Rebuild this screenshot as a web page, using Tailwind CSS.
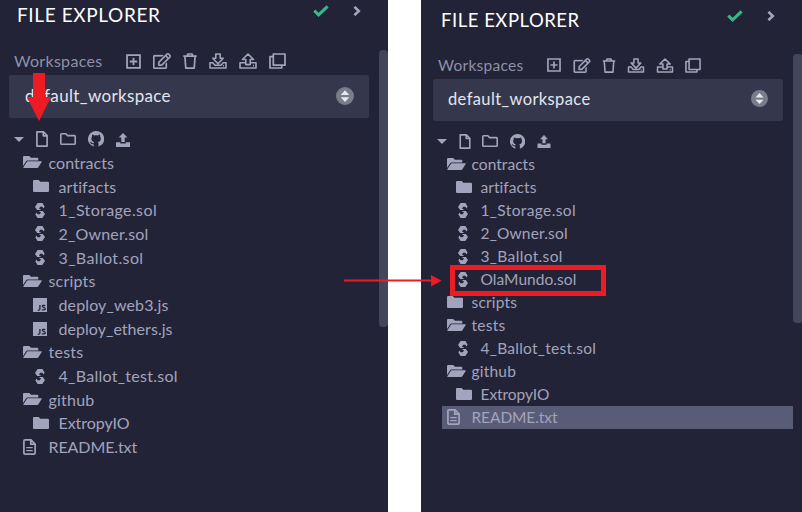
<!DOCTYPE html>
<html lang="en">
<head>
<meta charset="utf-8">
<title>File Explorer</title>
<script src="https://cdn.jsdelivr.net/npm/@tailwindcss/browser@4"></script>
</head>
<body class="bg-white overflow-hidden font-['Lato','Noto_Sans',sans-serif]">
<svg class="hidden">
  <symbol id="check" viewBox="0 0 16 12"><path d="M1.3 5.6 5.6 9.8 14.6 1.3" fill="none" stroke="#32ba89" stroke-width="3"/></symbol>
  <symbol id="chev" viewBox="0 0 8 10"><path d="M1.4 .8 5.8 5 1.4 9.200" fill="none" stroke="currentColor" stroke-width="2.600"/></symbol>
  <symbol id="plus" viewBox="0 0 16 16"><path d="M1.1 1.1h13.800v13.800H1.100zM8 4v8M4 8h8" fill="none" stroke="currentColor" stroke-width="1.900"/></symbol>
  <symbol id="edit" viewBox="0 0 576 512"><path fill="currentColor" stroke="currentColor" stroke-width="8" d="M402.300 344.900l32-32c5-5 13.700-1.500 13.700 5.700V464c0 26.500-21.500 48-48 48H48c-26.500 0-48-21.500-48-48V112c0-26.500 21.500-48 48-48h273.500c7.100 0 10.700 8.600 5.700 13.700l-32 32c-1.500 1.500-3.500 2.300-5.700 2.300H48v352h352V350.500c0-2.100.8-4.100 2.300-5.600zm156.600-201.800L296.300 405.700l-90.400 10c-26.200 2.900-48.500-19.200-45.600-45.600l10-90.400L432.900 17.100c22.900-22.900 59.900-22.900 82.700 0l43.200 43.200c22.900 22.900 22.900 60 .1 82.800zM460.100 174L402 115.900 216.200 301.800l-7.300 65.300 65.300-7.300L460.100 174zm64.800-79.700l-43.200-43.200c-4.100-4.100-10.800-4.100-14.800 0L436 82l58.100 58.100 30.900-30.900c4-4.200 4-10.800-.1-14.900z"/></symbol>
  <symbol id="trash" viewBox="0 0 14 16"><path d="M.3 3.200h13.400M4 2.800l1-1.800h4l1 1.800M1.900 3.500l.9 11.600h8.400l.9-11.600" fill="none" stroke="currentColor" stroke-width="1.700" stroke-linejoin="round"/></symbol>
  <symbol id="down" viewBox="0 0 18 16"><path d="M4.200 9.700H1v5.300h16V9.700h-3.200M6.800 1h4.400v4.200h3L9 10.800 3.800 5.200h3zM3.800 9.700 6 12.200h6l2.200-2.500M14 12.700h1" fill="none" stroke="currentColor" stroke-width="1.600" stroke-linejoin="round"/></symbol>
  <symbol id="up" viewBox="0 0 18 16"><path d="M6.800 9.700H1v5.300h16V9.700h-5.800M6.800 11.600V6.500H3.400L9 1l5.600 5.500h-3.400v5.100zM6.800 11.600h4.400M14 12.600h1" fill="none" stroke="currentColor" stroke-width="1.600" stroke-linejoin="round"/></symbol>
  <symbol id="copy" viewBox="0 0 17 16"><path d="M4.300 1h11.700v11.200H4.300zM3.800 3.700H1V15h11.700v-2.500" fill="none" stroke="currentColor" stroke-width="1.700" stroke-linejoin="round"/></symbol>
  <symbol id="sort" viewBox="0 0 18 18"><circle cx="9" cy="9" r="9" fill="#797c8a"/><path d="M4.700 8 9 3.200 13.300 8zM4.700 10.200h8.600L9 14.900z" fill="#e6e8ee"/></symbol>
  <symbol id="caret" viewBox="0 0 10 5"><path d="M0 0h10L5 5z" fill="currentColor"/></symbol>
  <symbol id="file" viewBox="0 0 12 16"><path d="M.9.9h6.600L11.100 4.500v10.600H.9zM7.300 1v3.800H11" fill="none" stroke="currentColor" stroke-width="1.700" stroke-linejoin="round"/></symbol>
  <symbol id="folderO" viewBox="0 0 16 12"><path d="M.8 1.500q0-.7.700-.7h4.300L7.600 2.600h6.900q.7 0 .7.700v7.200q0 .7-.7.700h-13q-.7 0-.7-.7z" fill="none" stroke="currentColor" stroke-width="1.600"/></symbol>
  <symbol id="github" viewBox="0 0 16 16"><path fill="currentColor" fill-rule="evenodd" d="M8 .1A7.900 7.900 0 0 0 5.700 15.600V13.200c-2 .4-2.900-.5-3.300-1.500-.2-.4-.5-.8-.9-1 .9-.2 1.500.3 2 .9.600.8 1.400.9 2.200.5.1-.5.300-.9.600-1.200-1.900-.3-2.900-1.300-2.900-3.500 0-.8.300-1.500.7-2-.1-.5-.1-1.100.2-1.800.8 0 1.400.4 2 .8a7 7 0 0 1 3.600 0c.6-.4 1.200-.8 2-.8.3.7.300 1.300.2 1.800.4.500.7 1.200.7 2 0 2.200-1 3.200-2.900 3.500.4.400.6.900.6 1.700v3A7.900 7.900 0 0 0 8 .1z"/></symbol>
  <symbol id="publish" viewBox="0 0 14 14"><path fill="currentColor" d="M7 0l4.400 4.600H8.700V9H5.300V4.600H2.600zM0 9.200h4.300v1.300h5.400V9.200H14V14H0z"/></symbol>
  <symbol id="open" viewBox="0 0 19 12"><path fill="currentColor" d="M0 1Q0 0 1 0h5.200l1.800 1.700h6.300q1 0 1 1v1.900H4.600q-1 0-1.600.8L0 10zM5 5.200h13.400q.6.200.3.800l-3.300 5.200q-.4.800-1.100.8H.7Q0 11.800.4 11.200L3.800 5.900q.4-.7 1.200-.7z"/></symbol>
  <symbol id="folder" viewBox="0 0 16 12"><path fill="currentColor" d="M0 1.100Q0 0 1.100 0h4.500l1.800 1.700h7.500q1.100 0 1.100 1.100v8.100q0 1.100-1.100 1.100H1.100Q0 12 0 10.900z"/></symbol>
  <symbol id="sol" viewBox="0 0 10 15"><path fill="currentColor" d="M2.600 0h4.800l2.200 3.500-1 2L7.400 3.800H5.200L4 5.600 6.300 7.100H2.200L0 4zM7.300 15H2.600L.4 11.500l1-2 1.200 1.700h2.200L6 9.400 3.700 7.900h4.100L10 11z"/></symbol>
  <symbol id="js" viewBox="0 0 14 14"><path fill="currentColor" d="M0 0h14v14H0z"/><path d="M6.900 6.900v4.200q0 1.300-2.200 1M12.300 7.500Q9.200 6.800 9.300 8.300C9.400 9.600 12.400 9.200 12.300 10.900q-.2 1.500-3.400.9" fill="none" stroke="#222336" stroke-width="1.300"/></symbol>
  <symbol id="text" viewBox="0 0 13 16"><path d="M.9 2q0-1.100 1.100-1.100h6L12.100 5v9q0 1.100-1.100 1.100H2q-1.100 0-1.100-1.100zM7.800 1v4.200H12" fill="none" stroke="currentColor" stroke-width="1.700"/><path d="M3.300 8.600h6.400M3.300 11.600h6.400" stroke="currentColor" stroke-width="1.400"/></symbol>
</svg>

<main class="relative flex w-[802px] h-[512px] justify-between text-[#a2a3bd]">
  <section class="relative w-[388px] h-[512px] bg-[#222336]">
    <header class="flex items-center h-[29px] pl-[17px] pr-[27px]">
      <h1 class="text-[19px] leading-[29px] tracking-[0.62px] text-white flex-1">FILE EXPLORER</h1>
      <svg class="w-4 h-3 mr-[24.5px] -mt-[8px]"><use href="#check"/></svg>
      <svg class="w-[8px] h-[10px] -mt-[8px]"><use href="#chev"/></svg>
    </header>
    <div class="flex items-center h-[28px] mt-[18px] pl-[14px]">
      <span class="text-[16px] w-[112px] tracking-[0.3px] text-[#8f90aa]">Workspaces</span>
      <svg class="w-[15px] h-[15px] mr-[12px]"><use href="#plus"/></svg>
      <svg class="w-[18px] h-[16px] mr-[12px]"><use href="#edit"/></svg>
      <svg class="w-[14px] h-[16px] mr-[12px]"><use href="#trash"/></svg>
      <svg class="w-[18px] h-[16px] mr-[12px]"><use href="#down"/></svg>
      <svg class="w-[18px] h-[16px] mr-[12px]"><use href="#up"/></svg>
      <svg class="w-[17px] h-[16px]"><use href="#copy"/></svg>
    </div>
    <div class="flex items-center justify-between w-[360px] h-[43px] ml-[9px] pl-[16px] pr-[15px] rounded-[2px] bg-[#35384c] text-[17px] tracking-[0.34px] text-[#e3e5f0]"><span class="-mt-px">default_workspace</span><svg class="w-[18px] h-[18px] -mt-[2px]"><use href="#sort"/></svg></div>
    <div class="flex items-center h-[33px] pt-[9px] pl-[14px]">
      <svg class="w-[10px] h-[5px] mr-[12px]"><use href="#caret"/></svg>
      <svg class="w-[12px] h-[16px] mr-[12px]"><use href="#file"/></svg>
      <svg class="w-[16px] h-[12px] mr-[12px]"><use href="#folderO"/></svg>
      <svg class="w-[16px] h-[16px] mr-[12px]"><use href="#github"/></svg>
      <svg class="w-[14px] h-[14px] mt-px"><use href="#publish"/></svg>
    </div>
    <ul id="before" class="text-[16px]"></ul>
    <div class="absolute left-[379px] top-[50px] w-[9px] h-[277px] rounded-[4px] bg-[#43465b]"></div>
  </section>

  <section class="relative w-[381px] h-[512px] bg-[#222336]">
    <header class="flex items-center h-[40px] pl-[20px] pr-[27px]">
      <h1 class="text-[18.5px] leading-[40px] tracking-[0.52px] text-white flex-1">FILE EXPLORER</h1>
      <svg class="w-4 h-3 mr-[24px] -mt-[8px]"><use href="#check"/></svg>
      <svg class="w-[8px] h-[10px] -mt-[8px]"><use href="#chev"/></svg>
    </header>
    <div class="flex items-center h-[28px] mt-[11px] pl-[17px]">
      <span class="text-[15.5px] w-[109px] pt-px tracking-[0.28px] text-[#8f90aa]">Workspaces</span>
      <svg class="w-[14px] h-[14px] mr-[11.5px]"><use href="#plus"/></svg>
      <svg class="w-[18px] h-[15px] mr-[11.500px]"><use href="#edit"/></svg>
      <svg class="w-[14px] h-[15px] mr-[11px]"><use href="#trash"/></svg>
      <svg class="w-[18px] h-[15px] mr-[11px]"><use href="#down"/></svg>
      <svg class="w-[18px] h-[15px] mr-[11px]"><use href="#up"/></svg>
      <svg class="w-[16px] h-[15px]"><use href="#copy"/></svg>
    </div>
    <div class="flex items-center justify-between w-[350px] h-[42px] ml-[12px] pl-[15px] pr-[15px] rounded-[2px] bg-[#35384c] text-[16.5px] tracking-[0.38px] text-[#e3e5f0]"><span class="-mt-[2px]">default_workspace</span><svg class="w-[17px] h-[17px] -mt-[3px]"><use href="#sort"/></svg></div>
    <div class="flex items-center h-[31.5px] pt-[9px] pl-[16px]">
      <svg class="w-[10px] h-[5px] mr-[12px] mt-px"><use href="#caret"/></svg>
      <svg class="w-[12px] h-[15px] mr-[11px]"><use href="#file"/></svg>
      <svg class="w-[16px] h-[12px] mr-[12px]"><use href="#folderO"/></svg>
      <svg class="w-[15px] h-[15px] mr-[12px]"><use href="#github"/></svg>
      <svg class="w-[14px] h-[13px] mt-px"><use href="#publish"/></svg>
    </div>
    <ul id="after" class="text-[15.5px] pt-[0.5px]"></ul>
    <div class="absolute left-[372px] top-[54px] w-[10px] h-[269px] rounded-[4px] bg-[#43465b]"></div>
  </section>

  <svg class="absolute left-0 top-0 w-[802px] h-[512px]" viewBox="0 0 802 512">
    <path d="M33 73h12v24h6L39 121 27 97h6z" fill="#ed1c24"/>
    <path d="M344 280.500h88" stroke="#ed1c24" stroke-width="2"/>
    <path d="M431 275v11.500l10.500-5.700z" fill="#ed1c24"/>
    <rect x="452.500" y="267.500" width="151" height="26" fill="none" stroke="#ed1c24" stroke-width="5"/>
  </svg>
</main>

<script>
const size = {
  open: 'w-[19px] h-[12px] -mt-px', folder: 'w-[16px] h-[12px] -mt-px', sol: 'w-[10px] h-[15px] ml-[2px]',
  js: 'w-[14px] h-[14px] mt-px', text: 'w-[13px] h-[16px] -mt-px'
};
const label = {
  'contracts': 'tracking-[0.003em]', 'artifacts': 'tracking-[0.004em]', '1_Storage.sol': 'tracking-[0.024em]',
  '2_Owner.sol': 'tracking-[0.011em]', '3_Ballot.sol': 'tracking-[0.023em]', 'OlaMundo.sol': 'tracking-[0.003em]',
  'scripts': 'tracking-[0.011em]', 'deploy_web3.js': 'tracking-[0.008em]', 'deploy_ethers.js': 'tracking-[0.003em]',
  'tests': 'tracking-[0.016em]', '4_Ballot_test.sol': 'tracking-[0.017em]', 'github': 'tracking-[0.013em]',
  'ExtropyIO': 'tracking-[-0.004em]', 'README.txt': 'tracking-[-0.006em]'
};
const head = [['open', 'contracts', 0], ['folder', 'artifacts', 1], ['sol', '1_Storage.sol', 1], ['sol', '2_Owner.sol', 1], ['sol', '3_Ballot.sol', 1]];
const tail = [['open', 'tests', 0], ['sol', '4_Ballot_test.sol', 1], ['open', 'github', 0], ['folder', 'ExtropyIO', 1], ['text', 'README.txt', 0]];
function render(id, rows, row, indent, iconBox, active) {
  document.getElementById(id).innerHTML = rows.map(([icon, name, level]) =>
    `<li class="flex items-center ${row} ${indent[level]} ${name === active ? 'bg-[#595c76]' : ''}">` +
    `<span class="${iconBox[level]}"><svg class="${size[icon]}"><use href="#${icon}"/></svg></span>` +
    `<span class="${label[name]}">${name}</span></li>`).join('');
}
render('before', [...head, ['open', 'scripts', 0], ['js', 'deploy_web3.js', 1], ['js', 'deploy_ethers.js', 1], ...tail],
  'h-[23.7px]', ['pl-[23px]', 'pl-[33px]'], ['w-[25.5px]', 'w-[25.5px]']);
render('after', [...head, ['sol', 'OlaMundo.sol', 1], ['folder', 'scripts', 0], ...tail],
  'h-[23.03px] ml-[21px] mr-[9px]', ['pl-[5px]', 'pl-[14px]'], ['w-[24.5px]', 'w-[24.5px]'], 'README.txt');
</script>
</body>
</html>
